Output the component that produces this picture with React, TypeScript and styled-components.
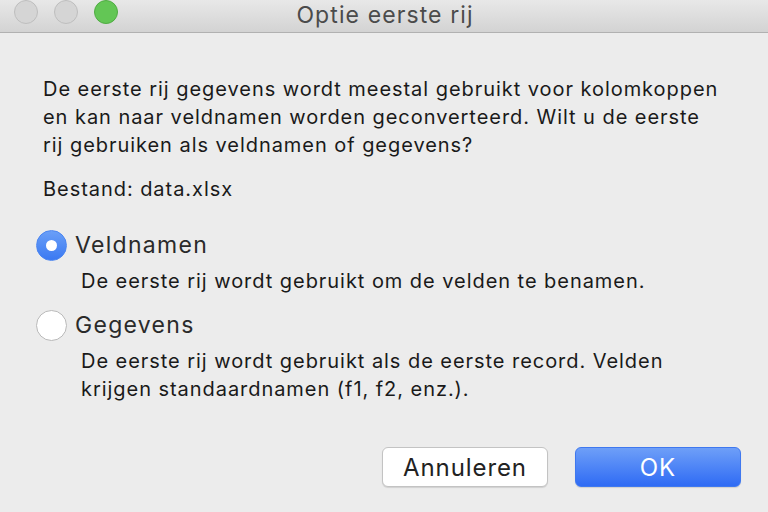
import React from "react";
import styled, { createGlobalStyle } from "styled-components";

const Global = createGlobalStyle`
  html, body { margin: 0; padding: 0; }
  body { width: 768px; height: 512px; overflow: hidden; background: #ececec; font-family: Inter, "Liberation Sans", Arial, sans-serif; -webkit-font-smoothing: antialiased; }
`;

const Window = styled.div`
  width: 768px;
  height: 512px;
  display: flex;
  flex-direction: column;
  background: #ececec;
`;

const TitleBar = styled.div`
  height: 32px;
  flex: none;
  position: relative;
  display: flex;
  align-items: center;
  justify-content: center;
  background: linear-gradient(#e8e8e8, #d3d3d3);
  border-bottom: 1px solid #b1b1b1;
`;

const Lights = styled.div`
  position: absolute;
  left: 14px;
  top: 0;
  display: flex;
  gap: 16px;
`;

const Light = styled.span<{ $green?: boolean }>`
  width: 24px;
  height: 24px;
  box-sizing: border-box;
  border-radius: 50%;
  background: ${(p) => (p.$green ? "#63c655" : "#d5d5d5")};
  border: 1px solid ${(p) => (p.$green ? "#50ac43" : "#bebebe")};
`;

const Title = styled.div`
  font-size: 23px;
  color: #4b4b4b;
  margin-top: -3px;
  margin-left: 2px;
  letter-spacing: 1.1px;
`;

const Body = styled.div`
  flex: 1;
  display: flex;
  flex-direction: column;
  padding: 0 0 0 43px;
  color: #1a1a1a;
`;

const Text = styled.p`
  margin: 0;
  font-size: 20px;
  line-height: 28px;
  letter-spacing: 0.95px;
`;

const Paragraph = styled(Text)`
  margin-top: 42px;
`;

const FileLine = styled(Text)`
  margin-top: 16px;
`;

const Options = styled.div`
  display: flex;
  flex-direction: column;
  margin-left: -7px;
  margin-top: 26px;
  gap: 14px;
`;

const Option = styled.div`
  display: grid;
  grid-template-columns: 32px 1fr;
  column-gap: 7px;
  align-items: center;
`;

const Radio = styled.span<{ $checked?: boolean }>`
  width: 31px;
  height: 31px;
  box-sizing: border-box;
  border-radius: 50%;
  display: flex;
  align-items: center;
  justify-content: center;
  background: ${(p) => (p.$checked ? "linear-gradient(#6a9ff7, #3b79f2)" : "#ffffff")};
  border: 1px solid ${(p) => (p.$checked ? "#4c86f0" : "#b9b9b9")};
  &::after {
    content: "";
    display: ${(p) => (p.$checked ? "block" : "none")};
    width: 11px;
    height: 11px;
    border-radius: 50%;
    background: #fff;
  }
`;

const Label = styled.span`
  font-size: 23px;
  line-height: 32px;
  color: #2a2a2a;
  letter-spacing: 1.3px;
`;

const Description = styled(Text)`
  grid-column: 2;
  margin: 6px 0 0 6px;
`;

const Buttons = styled.div`
  margin-top: auto;
  margin-bottom: 25px;
  margin-right: 27px;
  display: flex;
  justify-content: flex-end;
  gap: 27px;
`;

const Button = styled.button<{ $primary?: boolean }>`
  width: 166px;
  height: 40px;
  border-radius: 6px;
  font-family: inherit;
  font-size: 24px;
  letter-spacing: 0.9px;
  padding: 0;
  color: ${(p) => (p.$primary ? "#ffffff" : "#222222")};
  background: ${(p) => (p.$primary ? "linear-gradient(#6e9ff8, #2f6bf4)" : "#ffffff")};
  border: 1px solid ${(p) => (p.$primary ? "#3f78ef" : "#c3c3c3")};
  box-shadow: 0 1px 1px rgba(0, 0, 0, 0.12);
`;

export default function App() {
  return (
    <>
      <Global />
      <Window>
        <TitleBar>
          <Lights>
            <Light />
            <Light />
            <Light $green />
          </Lights>
          <Title>Optie eerste rij</Title>
        </TitleBar>
        <Body>
          <Paragraph>
            De eerste rij gegevens wordt meestal gebruikt voor kolomkoppen
            <br />
            en kan naar veldnamen worden geconverteerd. Wilt u de eerste
            <br />
            rij gebruiken als veldnamen of gegevens?
          </Paragraph>
          <FileLine>Bestand: data.xlsx</FileLine>
          <Options>
            <Option>
              <Radio $checked />
              <Label>Veldnamen</Label>
              <Description>De eerste rij wordt gebruikt om de velden te benamen.</Description>
            </Option>
            <Option>
              <Radio />
              <Label>Gegevens</Label>
              <Description>
                De eerste rij wordt gebruikt als de eerste record. Velden
                <br />
                krijgen standaardnamen (f1, f2, enz.).
              </Description>
            </Option>
          </Options>
          <Buttons>
            <Button>Annuleren</Button>
            <Button $primary>OK</Button>
          </Buttons>
        </Body>
      </Window>
    </>
  );
}
